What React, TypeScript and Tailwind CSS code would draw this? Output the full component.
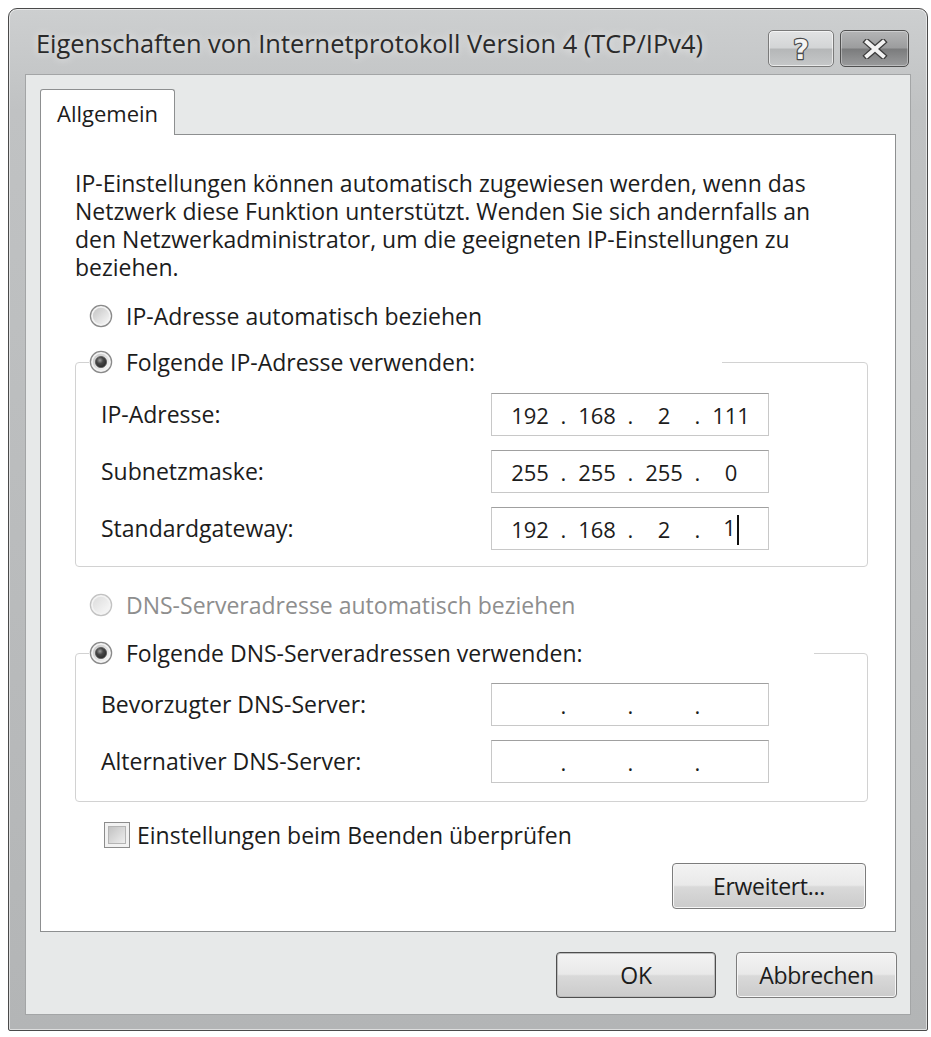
import React from "react";

const txt = "text-[#1c1c1c]";

function Radio({ checked, disabled, id }: { checked?: boolean; disabled?: boolean; id: string }) {
  return (
    <svg width="24" height="24" viewBox="0 0 24 24" className="shrink-0">
      <defs>
        <linearGradient id={`rf-${id}`} x1="0" y1="0" x2="1" y2="1">
          <stop offset="0" stopColor={disabled ? "#dcdcdc" : "#c4c4c4"} />
          <stop offset="1" stopColor="#f8f8f8" />
        </linearGradient>
        <radialGradient id={`rd-${id}`} cx="0.4" cy="0.35" r="0.65">
          <stop offset="0" stopColor="#a0a0a0" />
          <stop offset="0.45" stopColor="#474747" />
          <stop offset="1" stopColor="#2a2a2a" />
        </radialGradient>
      </defs>
      <circle cx="12" cy="12" r="10.6" fill="#f3f3f3" stroke={disabled ? "#c2c2c2" : "#8a8a8a"} strokeWidth="1.3" />
      <circle cx="12" cy="12" r="8.2" fill={`url(#rf-${id})`} />
      {checked && <circle cx="12" cy="12" r="5.6" fill={`url(#rd-${id})`} stroke="#5a5a5a" strokeWidth="0.8" />}
    </svg>
  );
}

function IpBox({ parts, caret }: { parts: string[]; caret?: boolean }) {
  return (
    <div className="w-[278px] h-[43px] shrink-0 border border-[#c8c8c8] border-t-[#a0a0a0] bg-white flex items-center pl-[6px] leading-[30px] text-[22px]">
      {parts.map((p, i) => (
        <React.Fragment key={i}>
          {i > 0 && <div className="w-[3px] flex justify-center">.</div>}
          <div className="w-[64px] text-center">
            {p}
            {caret && i === 3 && <span className="inline-block w-[2px] h-[30px] bg-[#111] align-middle ml-[1px]" />}
          </div>
        </React.Fragment>
      ))}
    </div>
  );
}

function FieldRow({ label, parts, caret }: { label: string; parts: string[]; caret?: boolean }) {
  return (
    <div className="flex items-center h-[43px]">
      <div className="w-[390px] shrink-0">{label}</div>
      <IpBox parts={parts} caret={caret} />
    </div>
  );
}

function Btn({ children, w, def }: { children: React.ReactNode; w: string; def?: boolean }) {
  return (
    <div
      className={`${w} h-[46px] rounded-[4px] border ${
        def ? "border-[#4e4e4e] shadow-[inset_0_0_0_1px_#bcbcbc]" : "border-[#7c7c7c] shadow-[inset_0_0_0_1px_#f6f6f6]"
      } bg-[linear-gradient(180deg,#f3f3f3_0%,#e9e9e9_48%,#d9d9d9_52%,#cbcbcb_100%)] flex items-center justify-center tracking-[-0.3px]`}
    >
      {children}
    </div>
  );
}

export default function App() {
  return (
    <div className={`w-[931px] h-[1037px] bg-white pt-[8px] pl-[8px] font-['Open_Sans',sans-serif] text-[23px] ${txt}`}>
      <div className="w-[920px] h-[1023px] rounded-t-[9px] rounded-b-[2px] border border-[#4a4a4a] bg-[linear-gradient(180deg,#cdcfd0_0%,#c0c2c3_10%,#b3b5b6_100%)] shadow-[inset_0_0_0_1px_rgba(255,255,255,0.55)] flex flex-col">
        {/* Title bar */}
        <div className="h-[65px] shrink-0 flex items-start pl-[27px] pr-[18px]">
          <div className="mt-[18px] leading-[32px] text-[25.4px] text-[#2a2a2a] [text-shadow:0_0_8px_rgba(255,255,255,0.8)] whitespace-nowrap">
            Eigenschaften von Internetprotokoll Version 4 (TCP/IPv4)
          </div>
          <div className="ml-auto mt-[21px] flex gap-[6px]">
            <div className="w-[66px] h-[37px] rounded-[5px] border border-[#7a7a7a] shadow-[inset_0_0_0_1px_rgba(255,255,255,0.6)] bg-[linear-gradient(180deg,#e2e3e4_0%,#d3d5d6_48%,#b5b7b8_52%,#c6c8c9_100%)] flex items-center justify-center">
              <svg width="30" height="30" viewBox="0 0 30 30">
                <text
                  x="15"
                  y="25"
                  textAnchor="middle"
                  fontFamily="DejaVu Sans, sans-serif"
                  fontWeight="bold"
                  fontSize="27"
                  fill="#f4f4f4"
                  stroke="#4a4a4a"
                  strokeWidth="2.4"
                  strokeLinejoin="round"
                  paintOrder="stroke"
                >
                  ?
                </text>
              </svg>
            </div>
            <div className="w-[69px] h-[37px] rounded-[5px] border border-[#505050] shadow-[inset_0_0_0_1px_rgba(255,255,255,0.35)] bg-[linear-gradient(180deg,#b4b5b6_0%,#9c9d9e_48%,#7b7c7d_52%,#9a9b9c_100%)] flex items-center justify-center">
              <svg width="26" height="20" viewBox="0 0 26 20">
                <path d="M5 3 L21 17 M21 3 L5 17" stroke="#3c3c3c" strokeWidth="6.5" strokeLinecap="square" />
                <path d="M5 3 L21 17 M21 3 L5 17" stroke="#f2f2f2" strokeWidth="4" strokeLinecap="square" />
              </svg>
            </div>
          </div>
        </div>

        {/* Client area */}
        <div className="mx-[16px] h-[941px] shrink-0 border border-[#a3a5a6] bg-[#e7e9e9] flex flex-col">
          <div className="pt-[14px] pl-[14px] flex">
            <div className="relative z-10 -mb-px w-[135px] h-[46px] border border-b-0 border-[#8d8f90] rounded-t-[3px] bg-white pl-[16px] leading-[46px] text-[22px]">
              Allgemein
            </div>
          </div>
          <div className="mx-[14px] h-[798px] border border-[#8d8f90] bg-white pt-[34px] pl-[34px] pr-[27px] flex flex-col">
            <div className="flex flex-col">
              <div className="h-[28px] leading-[28px] whitespace-nowrap">IP-Einstellungen können automatisch zugewiesen werden, wenn das</div>
              <div className="h-[28px] leading-[28px] whitespace-nowrap">Netzwerk diese Funktion unterstützt. Wenden Sie sich andernfalls an</div>
              <div className="h-[28px] leading-[28px] whitespace-nowrap">den Netzwerkadministrator, um die geeigneten IP-Einstellungen zu</div>
              <div className="h-[28px] leading-[28px] whitespace-nowrap">beziehen.</div>
            </div>

            <div className="mt-[20px] h-[30px] pl-[14px] flex items-center gap-[13px]">
              <Radio id="a" />
              <span>IP-Adresse automatisch beziehen</span>
            </div>

            <fieldset className="mt-[16px] border border-[#d2d2d2] rounded-[4px]">
              <legend className="ml-[13px] w-[633px] h-[30px] flex items-center gap-[13px]">
                <Radio id="b" checked />
                <span>Folgende IP-Adresse verwenden:</span>
              </legend>
              <div className="pt-[16px] pb-[16px] pl-[25px] flex flex-col gap-[14px]">
                <FieldRow label="IP-Adresse:" parts={["192", "168", "2", "111"]} />
                <FieldRow label="Subnetzmaske:" parts={["255", "255", "255", "0"]} />
                <FieldRow label="Standardgateway:" parts={["192", "168", "2", "1"]} caret />
              </div>
            </fieldset>

            <div className="mt-[23px] h-[30px] pl-[14px] flex items-center gap-[13px]">
              <Radio id="c" disabled />
              <span className="text-[#8e8e8e]">DNS-Serveradresse automatisch beziehen</span>
            </div>

            <fieldset className="mt-[18px] border border-[#d2d2d2] rounded-[4px]">
              <legend className="ml-[13px] w-[725px] h-[30px] flex items-center gap-[13px]">
                <Radio id="d" checked />
                <span>Folgende DNS-Serveradressen verwenden:</span>
              </legend>
              <div className="pt-[15px] pb-[18px] pl-[25px] flex flex-col gap-[14px]">
                <FieldRow label="Bevorzugter DNS-Server:" parts={["", "", "", ""]} />
                <FieldRow label="Alternativer DNS-Server:" parts={["", "", "", ""]} />
              </div>
            </fieldset>

            <div className="mt-[18px] h-[30px] pl-[29px] flex items-center gap-[7px]">
              <div className="w-[26px] h-[26px] border border-[#8c8c8c] bg-[#f2f2f2] p-[3px]">
                <div className="w-full h-full border border-[#b4b4b4] bg-[linear-gradient(135deg,#c2c2c2,#eeeeee)]" />
              </div>
              <span>Einstellungen beim Beenden überprüfen</span>
            </div>

            <div className="mt-[13px] flex justify-end pr-[2px]">
              <Btn w="w-[194px]">Erweitert...</Btn>
            </div>
          </div>

          <div className="pt-[20px] pr-[13px] flex justify-end gap-[20px]">
            <Btn w="w-[160px]" def>
              OK
            </Btn>
            <Btn w="w-[161px]">Abbrechen</Btn>
          </div>
        </div>
      </div>
    </div>
  );
}
